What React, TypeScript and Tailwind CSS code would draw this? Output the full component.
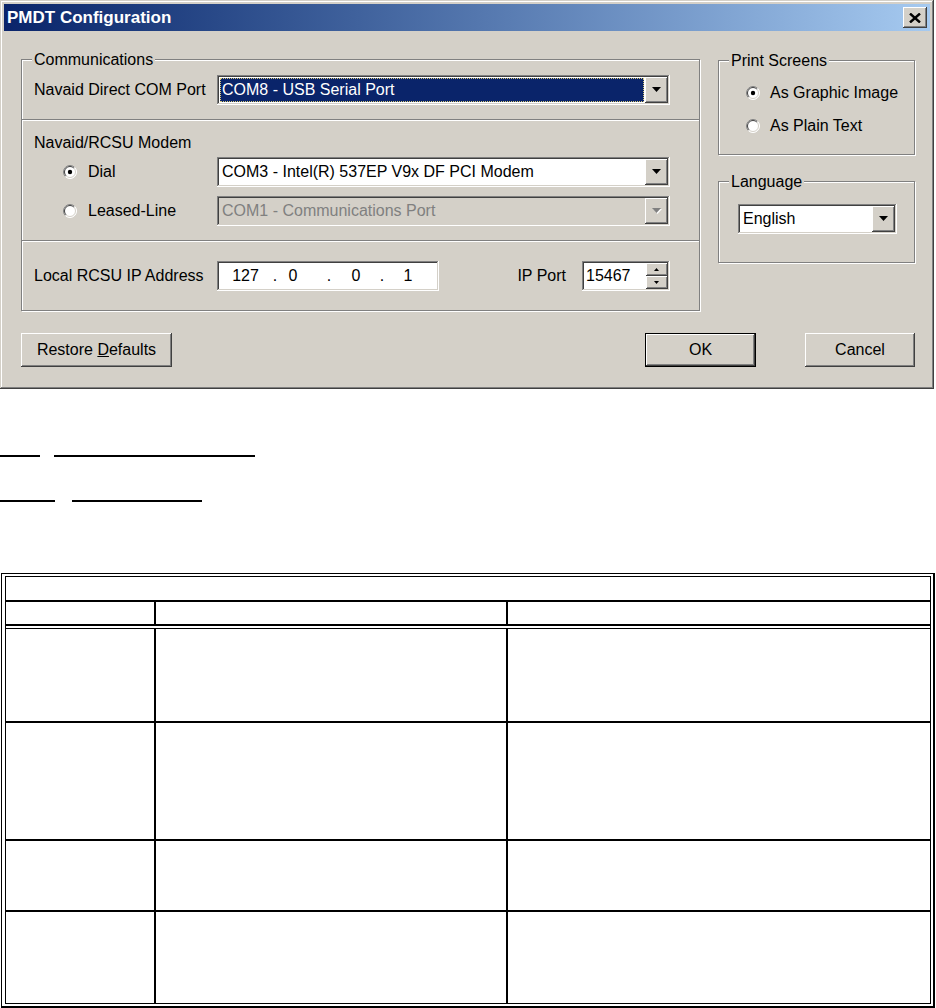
import type { ReactNode } from "react";

const raised =
  "shadow-[inset_-1px_-1px_#404040,inset_1px_1px_#ffffff,inset_-2px_-2px_#808080,inset_2px_2px_#d4d0c8]";
const sunken =
  "shadow-[inset_-1px_-1px_#ffffff,inset_1px_1px_#808080,inset_-2px_-2px_#d4d0c8,inset_2px_2px_#404040]";

function Arrow({ down = true, gray = false, w = 9, h = 5 }: { down?: boolean; gray?: boolean; w?: number; h?: number }) {
  const pts = down ? `0,0 ${w},0 ${w / 2},${h}` : `0,${h} ${w},${h} ${w / 2},0`;
  return (
    <svg width={w + 1} height={h + 1} viewBox={`0 0 ${w + 1} ${h + 1}`}>
      {gray && <polygon points={pts} fill="#ffffff" transform="translate(1,1)" />}
      <polygon points={pts} fill={gray ? "#808080" : "#000000"} />
    </svg>
  );
}

function DropButton({ disabled = false }: { disabled?: boolean }) {
  return (
    <div className={`flex h-full w-[23px] shrink-0 items-center justify-center bg-[#d4d0c8] ${raised}`}>
      <Arrow gray={disabled} />
    </div>
  );
}

function Combo({
  text,
  width,
  selected = false,
  disabled = false,
}: {
  text: string;
  width: string;
  selected?: boolean;
  disabled?: boolean;
}) {
  return (
    <div className={`flex h-[30px] shrink-0 p-[2px] ${width} ${disabled ? "bg-[#d4d0c8]" : "bg-white"} ${sunken}`}>
      {selected ? (
        <div className="flex min-w-0 flex-1 p-[1px]">
          <div className="flex flex-1 items-center border border-dotted border-[#d8c878] bg-[#0a246a] pl-[1px] text-white">
            {text}
          </div>
        </div>
      ) : (
        <div className={`flex min-w-0 flex-1 items-center pl-[3px] ${disabled ? "text-[#808080]" : ""}`}>{text}</div>
      )}
      <DropButton disabled={disabled} />
    </div>
  );
}

// classic sunken radio button
function Radio({ checked = false }: { checked?: boolean }) {
  return (
    <svg width="14" height="14" viewBox="0 0 14 14" className="shrink-0">
      <circle cx="7" cy="7" r="6.5" fill="#ffffff" />
      <path d="M2.4 11.6 A6.5 6.5 0 0 1 11.6 2.4" stroke="#808080" strokeWidth="1" fill="none" />
      <path d="M11.6 2.4 A6.5 6.5 0 0 1 2.4 11.6" stroke="#ffffff" strokeWidth="1" fill="none" />
      <path d="M3.1 10.9 A5.5 5.5 0 0 1 10.9 3.1" stroke="#404040" strokeWidth="1" fill="none" />
      <path d="M10.9 3.1 A5.5 5.5 0 0 1 3.1 10.9" stroke="#d4d0c8" strokeWidth="1" fill="none" />
      {checked && <circle cx="7" cy="7" r="2.2" fill="#000000" />}
    </svg>
  );
}

function GroupBox({ label, className, children }: { label: string; className: string; children?: ReactNode }) {
  return (
    <div
      className={`relative border border-[#808080] shadow-[1px_1px_0_#ffffff,inset_1px_1px_0_#ffffff] ${className}`}
    >
      <span className="absolute -top-[9px] left-[10px] bg-[#d4d0c8] px-[2px] leading-[18px]">{label}</span>
      {children}
    </div>
  );
}

function Divider() {
  return <div className="h-[2px] border-t border-b border-t-[#808080] border-b-white" />;
}

function Button({ children, className, isDefault = false }: { children: ReactNode; className: string; isDefault?: boolean }) {
  if (isDefault) {
    return (
      <div className={`h-[34px] border border-black ${className}`}>
        <div className={`flex h-full items-center justify-center ${raised}`}>{children}</div>
      </div>
    );
  }
  return <div className={`flex h-[34px] items-center justify-center ${raised} ${className}`}>{children}</div>;
}

function Dialog() {
  return (
    <div
      className={`flex h-[389px] w-[934px] flex-col bg-[#d4d0c8] p-[4px] shadow-[inset_-1px_-1px_#404040,inset_1px_1px_#d4d0c8,inset_-2px_-2px_#808080,inset_2px_2px_#ffffff]`}
    >
      <div className="flex h-[27px] shrink-0 items-center justify-between bg-linear-to-r from-[#0a246a] to-[#a6caf0] pl-[3px] pr-[3px]">
        <span className="text-[17px] font-bold text-white">PMDT Configuration</span>
        <div className={`flex h-[21px] w-[24px] items-center justify-center bg-[#d4d0c8] ${raised}`}>
          <svg width="12" height="10" viewBox="0 0 12 10">
            <path d="M1 0.5 L11 9.5 M11 0.5 L1 9.5" stroke="#000" strokeWidth="2.4" />
          </svg>
        </div>
      </div>

      <div className="flex flex-1 flex-col pl-[17px] pr-[15px]">
        <div className="mt-[28px] flex">
          <GroupBox label="Communications" className="h-[252px] w-[679px]">
            <div className="flex h-[59px] items-center">
              <div className="w-[195px] pl-[12px]">Navaid Direct COM Port</div>
              <Combo text="COM8 - USB Serial Port" width="w-[453px]" selected />
            </div>
            <Divider />
            <div className="flex h-[119px] flex-col">
              <div className="mt-[13px] pl-[12px] leading-[18px]">Navaid/RCSU Modem</div>
              <div className="mt-[5px] flex items-center">
                <div className="flex w-[195px] items-center gap-[11px] pl-[41px]">
                  <Radio checked />
                  <span>Dial</span>
                </div>
                <Combo text="COM3 - Intel(R) 537EP V9x DF PCI Modem" width="w-[453px]" />
              </div>
              <div className="mt-[9px] flex items-center">
                <div className="flex w-[195px] items-center gap-[11px] pl-[41px]">
                  <Radio />
                  <span>Leased-Line</span>
                </div>
                <Combo text="COM1 - Communications Port" width="w-[453px]" disabled />
              </div>
            </div>
            <Divider />
            <div className="flex h-[68px] items-center">
              <div className="w-[195px] pl-[12px]">Local RCSU IP Address</div>
              <div className={`flex h-[30px] w-[222px] items-center bg-white p-[2px] ${sunken}`}>
                <span className="ml-[10px] w-[33px] text-center">127</span>
                <span className="ml-[10px] w-[6px] text-center">.</span>
                <span className="ml-[8px] w-[14px] text-center">0</span>
                <span className="ml-[26px] w-[6px] text-center">.</span>
                <span className="ml-[17px] w-[14px] text-center">0</span>
                <span className="ml-[16px] w-[6px] text-center">.</span>
                <span className="ml-[16px] w-[14px] text-center">1</span>
              </div>
              <span className="ml-auto">IP Port</span>
              <div className={`ml-[16px] mr-[29px] flex h-[30px] w-[88px] bg-white p-[2px] ${sunken}`}>
                <div className="flex flex-1 items-center pl-[2px]">15467</div>
                <div className="flex w-[22px] flex-col">
                  <div className={`flex h-[13px] items-center justify-center bg-[#d4d0c8] ${raised}`}>
                    <Arrow down={false} w={5} h={3} />
                  </div>
                  <div className={`flex h-[13px] items-center justify-center bg-[#d4d0c8] ${raised}`}>
                    <Arrow w={5} h={3} />
                  </div>
                </div>
              </div>
            </div>
          </GroupBox>

          <div className="ml-[18px] flex flex-col">
            <GroupBox label="Print Screens" className="mt-[1px] h-[95px] w-[197px]">
              <div className="flex flex-col pl-[27px] pt-[23px]">
                <div className="flex h-[18px] items-center gap-[10px]">
                  <Radio checked />
                  <span>As Graphic Image</span>
                </div>
                <div className="mt-[15px] flex h-[18px] items-center gap-[10px]">
                  <Radio />
                  <span>As Plain Text</span>
                </div>
              </div>
            </GroupBox>
            <GroupBox label="Language" className="mt-[26px] h-[82px] w-[197px]">
              <div className="pl-[19px] pt-[22px]">
                <Combo text="English" width="w-[159px]" />
              </div>
            </GroupBox>
          </div>
        </div>

        <div className="mt-[22px] flex">
          <Button className="w-[151px]">
            <span>
              Restore <span className="underline">D</span>efaults
            </span>
          </Button>
          <Button className="ml-auto w-[111px]" isDefault>
            OK
          </Button>
          <Button className="ml-[49px] w-[110px]">Cancel</Button>
        </div>
      </div>
    </div>
  );
}

function Row({ h, last = false }: { h: string; last?: boolean }) {
  return (
    <div className={`flex ${h} ${last ? "" : "border-b-2 border-black"}`}>
      <div className="w-[150px] border-r-2 border-black" />
      <div className="w-[352px] border-r-2 border-black" />
      <div className="flex-1" />
    </div>
  );
}

export default function App() {
  return (
    <div className="h-[1008px] w-[936px] overflow-hidden bg-white font-['Liberation_Sans',Arial,sans-serif] text-[16px] text-black">
      <Dialog />

      <div className="mt-[66px] flex h-[2px]">
        <div className="w-[40px] bg-black" />
        <div className="ml-[14px] w-[201px] bg-black" />
      </div>
      <div className="mt-[43px] flex h-[2px]">
        <div className="w-[55px] bg-black" />
        <div className="ml-[17px] w-[130px] bg-black" />
      </div>

      <div className="ml-[1px] mt-[71px] w-[934px] border-t border-l border-r-2 border-b-2 border-black pb-[2px] pl-[3px] pr-[2px] pt-[2px]">
        <div className="border border-black">
          <div className="h-[25px] border-b-2 border-black" />
          <div className="border-b-2 border-black">
            <Row h="h-[22px]" last />
          </div>
          <div className="h-[2px]" />
          <div className="h-[1px] bg-black" />
          <Row h="h-[94px]" />
          <Row h="h-[118px]" />
          <Row h="h-[71px]" />
          <Row h="h-[91px]" last />
        </div>
      </div>
    </div>
  );
}
